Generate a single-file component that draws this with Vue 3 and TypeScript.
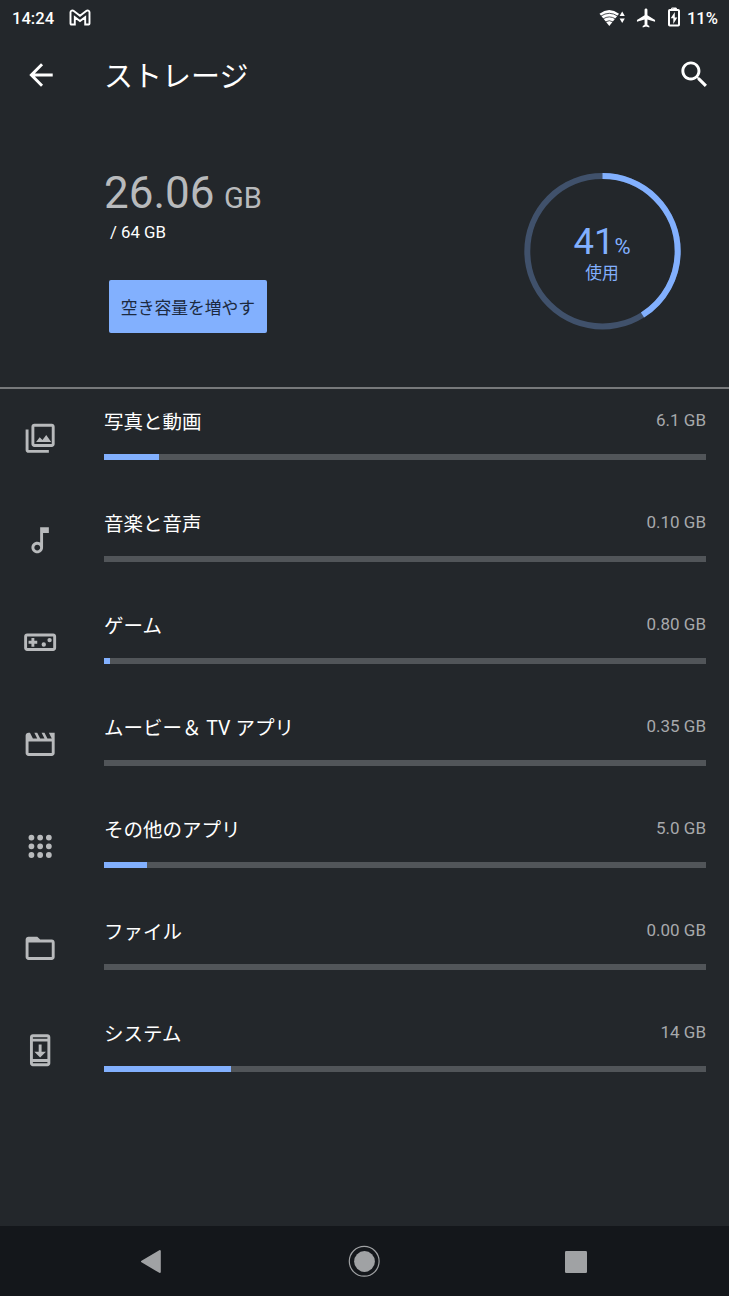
<script setup lang="ts">
interface Category {
  name: string
  size: string
  fill: number
  icon: string
}

const usedPercent = 41
const ringRadius = 75.2
const ringLength = 2 * Math.PI * ringRadius

const categories: Category[] = [
  {
    name: '写真と動画',
    size: '6.1 GB',
    fill: 54.7,
    icon: 'M20 4v12H8V4h12m0-2H8c-1.1 0-2 .9-2 2v12c0 1.1.9 2 2 2h12c1.1 0 2-.9 2-2V4c0-1.1-.9-2-2-2zM9.2 14.500l2.500-3.300 1.900 2 2.600-3.400 3.400 4.700zM2 6v14c0 1.1.9 2 2 2h14v-2H4V6H2z',
  },
  {
    name: '音楽と音声',
    size: '0.10 GB',
    fill: 0,
    icon: 'M12 3l.01 10.55c-.59-.34-1.27-.55-2-.55C7.79 13 6 14.79 6 17s1.79 4 4.01 4S14 19.21 14 17V7h4V3h-6zm-1.99 16c-1.1 0-2-.9-2-2s.9-2 2-2 2 .9 2 2-.9 2-2 2z',
  },
  {
    name: 'ゲーム',
    size: '0.80 GB',
    fill: 6,
    icon: 'M21 6H3c-1.1 0-2 .9-2 2v8c0 1.1.9 2 2 2h18c1.1 0 2-.9 2-2V8c0-1.1-.9-2-2-2zm0 10H3V8h18v8zM6 15h2v-2h2v-2H8V9H6v2H4v2h2zM14.5 12a1.5 1.5 0 1 0 0 3 1.5 1.5 0 1 0 0-3zM18.5 9a1.5 1.5 0 1 0 0 3 1.5 1.5 0 1 0 0-3z',
  },
  {
    name: 'ムービー＆ TV アプリ',
    size: '0.35 GB',
    fill: 0,
    icon: 'M18 4l2 4h-3l-2-4h-2l2 4h-3l-2-4H8l2 4H7L5 4H4c-1.1 0-2 .9-2 2v12c0 1.1.9 2 2 2h16c1.1 0 2-.9 2-2V4h-4zm2 14H4v-8h16v8z',
  },
  {
    name: 'その他のアプリ',
    size: '5.0 GB',
    fill: 42.5,
    icon: 'M6 4a2 2 0 1 0 0 4 2 2 0 1 0 0-4zM12 4a2 2 0 1 0 0 4 2 2 0 1 0 0-4zM18 4a2 2 0 1 0 0 4 2 2 0 1 0 0-4zM6 10a2 2 0 1 0 0 4 2 2 0 1 0 0-4zM12 10a2 2 0 1 0 0 4 2 2 0 1 0 0-4zM18 10a2 2 0 1 0 0 4 2 2 0 1 0 0-4zM6 16a2 2 0 1 0 0 4 2 2 0 1 0 0-4zM12 16a2 2 0 1 0 0 4 2 2 0 1 0 0-4zM18 16a2 2 0 1 0 0 4 2 2 0 1 0 0-4z',
  },
  {
    name: 'ファイル',
    size: '0.00 GB',
    fill: 0,
    icon: 'M20 6h-8l-2-2H4c-1.1 0-1.99.9-1.99 2L2 18c0 1.1.9 2 2 2h16c1.1 0 2-.9 2-2V8c0-1.1-.9-2-2-2zm0 12H4V8h16v10z',
  },
  {
    name: 'システム',
    size: '14 GB',
    fill: 126.8,
    icon: 'M17 1.01L7 1c-1.1 0-2 .9-2 2v18c0 1.1.9 2 2 2h10c1.1 0 2-.9 2-2V3c0-1.1-.9-1.99-2-1.99zM17 21H7v-1h10v1zm0-3H7V6h10v12zm0-14H7V3h10v1zm-1 9h-3V8h-2v5H8l4 4 4-4z',
  },
]
</script>

<template>
  <div class="screen">
    <header class="status">
      <span class="clock">14:24</span>
      <svg class="mail" width="22" height="17" viewBox="0 0 22 17">
        <path d="M1.5 3.3C1.5 1.5 3.6 1 4.8 1.9L11 6.7l6.2-4.8c1.2-.9 3.3-.4 3.3 1.4v11.3c0 .5-.4.9-.9.9h-3.400V8.200L11 12 5.800 8.200v7.300H2.400c-.5 0-.9-.4-.9-.9z" />
      </svg>
      <span class="spacer"></span>
      <svg class="wifi" width="28" height="18" viewBox="0 0 28 18">
        <path d="M.5 4.7Q10.300 -2.600 20 4.700L10.300 17z" fill="#fff" />
        <path class="wave" d="M1.700 7.200Q10.300 1.400 18.900 7.200M3.900 10Q10.300 5.800 16.700 10M6.200 13Q10.300 10.400 14.400 13" />
        <path d="M20.600 7L23.200 2.500l2.600 4.500zM20.600 9.500L23.200 14l2.600-4.500z" fill="#fff" />
      </svg>
      <svg class="plane" width="20" height="20" viewBox="1 1.500 21 21">
        <path d="M21 16v-2l-8-5V3.5c0-.83-.67-1.5-1.5-1.5S10 2.67 10 3.5V9l-8 5v2l8-2.5V19l-2 1.5V22l3.5-1 3.5 1v-1.5L13 19v-5.5l8 2.500z" fill="#fff" />
      </svg>
      <svg class="battery" width="12" height="20" viewBox="0 0 12 20">
        <path d="M3.7 1h4.6v2M3.7 1v2" fill="#fff" stroke="#fff" />
        <rect x="1" y="3" width="10" height="15.5" rx=".8" />
        <path d="M6.800 5L2.700 11.300h2.600V17l4-6.600H6.800z" fill="#fff" />
      </svg>
      <span class="charge">11%</span>
    </header>

    <nav class="toolbar">
      <svg class="back" width="36" height="36" viewBox="0 0 24.6 24.6">
        <path d="M20.300 11.300H8.130l5.590-5.590L12.300 4.300l-8 8 8 8 1.410-1.410L8.130 13.300H20.300v-2z" fill="#fff" />
      </svg>
      <h1>ストレージ</h1>
      <svg class="search" width="36" height="36" viewBox="0 0 24.6 24.6">
        <path d="M15.500 14h-.790l-.280-.270C15.410 12.590 16 11.110 16 9.500 16 5.910 13.090 3 9.500 3S3 5.910 3 9.500 5.910 16 9.500 16c1.610 0 3.090-.590 4.230-1.570l.270.280v.790l5 4.990L20.490 19l-4.990-5zm-6 0C7.010 14 5 11.990 5 9.500S7.010 5 9.500 5 14 7.010 14 9.500 11.990 14 9.500 14z" fill="#fff" />
      </svg>
    </nav>

    <section class="summary">
      <div class="usage">
        <div class="used">26.06 <small>GB</small></div>
        <div class="total">/ 64 GB</div>
        <button class="free">空き容量を増やす</button>
      </div>
      <div class="ring">
        <svg width="158" height="158" viewBox="-79.5 -79.3 158 158">
          <circle class="track" :r="ringRadius" />
          <circle
            class="arc"
            :r="ringRadius"
            :stroke-dasharray="`${(ringLength * usedPercent) / 100} ${ringLength}`"
            transform="rotate(-90)"
          />
        </svg>
        <div class="ring-label">
          <div class="percent">{{ usedPercent }}<small>%</small></div>
          <div class="caption">使用</div>
        </div>
      </div>
    </section>

    <ul class="list">
      <li v-for="c in categories" :key="c.name" class="row">
        <svg class="icon" width="36" height="36" viewBox="-.5 -.6 24.8 24.8">
          <path :d="c.icon" fill-rule="evenodd" />
        </svg>
        <div class="body">
          <div class="texts">
            <span class="name">{{ c.name }}</span>
            <span class="size">{{ c.size }}</span>
          </div>
          <div class="bar"><div class="fill" :style="{ width: c.fill + 'px' }"></div></div>
        </div>
      </li>
    </ul>

    <footer class="navbar">
      <svg width="24" height="26" viewBox="0 0 24 26">
        <path d="M3 13.500L20.800 3v21z" fill="#a0a2a4" stroke="#a0a2a4" stroke-width="2" stroke-linejoin="round" />
      </svg>
      <svg width="32" height="32" viewBox="0 0 32 32">
        <circle cx="16.200" cy="16.300" r="14.900" fill="none" stroke="#a0a2a4" stroke-width="1.200" />
        <circle cx="16.500" cy="16.500" r="10.400" fill="#a0a2a4" />
      </svg>
      <svg width="22" height="23" viewBox="0 0 22 23">
        <rect y="1" width="22" height="22" rx="1.300" fill="#a0a2a4" />
      </svg>
    </footer>
  </div>
</template>

<style>
body {
  margin: 0;
  background: #23272b;
}
</style>

<style scoped>
.screen {
  width: 729px;
  height: 1296px;
  display: flex;
  flex-direction: column;
  overflow: hidden;
  background: #23272b;
  color: #fff;
  font-family: Roboto, 'Noto Sans CJK JP', sans-serif;
}
svg {
  display: block;
  flex: none;
}
.status {
  height: 35px;
  box-sizing: border-box;
  padding: 0 11px 0 12px;
  display: flex;
  align-items: center;
  font-size: 16.6px;
  font-weight: 500;
}
.clock,
.charge {
  padding-top: 1px;
}
.mail {
  margin: 0 0 1px 15px;
}
.mail path {
  fill: none;
  stroke: #fff;
  stroke-width: 1.9;
}
.spacer {
  flex: 1;
}
.wave {
  fill: none;
  stroke: #23272b;
  stroke-width: 0.8;
}
.plane {
  margin-left: 9px;
}
.battery {
  margin: 0 7px 1px 12px;
}
.battery rect {
  fill: none;
  stroke: #fff;
  stroke-width: 2;
}
.toolbar {
  height: 81px;
  display: flex;
  align-items: center;
  padding: 0 16px 0 23px;
}
.back,
.search {
  margin-bottom: 1px;
}
h1 {
  flex: 1;
  margin: 2px 0 0 45px;
  font-size: 29px;
  line-height: 40px;
  font-weight: 400;
}
.summary {
  height: 271px;
  border-bottom: 2px solid #77797b;
  display: flex;
  justify-content: space-between;
  box-sizing: content-box;
  padding: 0 48px 0 104px;
}
.usage {
  padding-top: 52px;
}
.used {
  font-size: 44px;
  line-height: 50px;
  color: #b8babc;
}
.used small {
  font-size: 29px;
  margin-left: -1.5px;
}
.total {
  margin: -2px 0 0 6px;
  font-size: 16.8px;
  line-height: 22px;
}
.free {
  display: block;
  margin: 37px 0 0 5px;
  width: 158px;
  height: 53px;
  padding: 0;
  border: 0;
  border-radius: 2px;
  background: #82b0fe;
  color: #1c2a40;
  font: inherit;
  font-size: 16.8px;
}
.ring {
  display: grid;
  place-items: center;
  height: 158px;
  margin-top: 56px;
}
.ring > * {
  grid-area: 1 / 1;
}
.ring circle {
  fill: none;
  stroke-width: 6;
}
.track {
  stroke: #40516b;
}
.arc {
  stroke: #82b0fe;
}
.ring-label {
  color: #82b0fe;
  text-align: center;
  padding-top: 6px;
}
.percent {
  font-size: 36.5px;
  line-height: 40px;
}
.percent small {
  font-size: 22px;
}
.caption {
  font-size: 16.8px;
  line-height: 22px;
  margin-top: -5px;
  margin-bottom: 2px;
}
.list {
  list-style: none;
  margin: 0;
  padding: 0;
  flex: 1;
}
.row {
  height: 102px;
  display: flex;
  padding: 0 23px 0 22px;
}
.icon {
  margin-top: 31px;
  fill: #b8babc;
}
.body {
  flex: 1;
  margin-left: 46px;
}
.texts {
  height: 65px;
  display: flex;
  justify-content: space-between;
}
.name {
  font-size: 19.5px;
  line-height: 30px;
  margin-top: 19px;
}
.size {
  font-size: 17px;
  line-height: 24px;
  margin-top: 19px;
  color: #a7a9ac;
}
.bar {
  height: 6px;
  background: #515559;
}
.fill {
  height: 6px;
  background: #82b0fe;
}
.navbar {
  height: 70px;
  background: #14171b;
  display: flex;
  align-items: center;
  justify-content: space-between;
  padding: 0 142px 0 139px;
}
</style>
